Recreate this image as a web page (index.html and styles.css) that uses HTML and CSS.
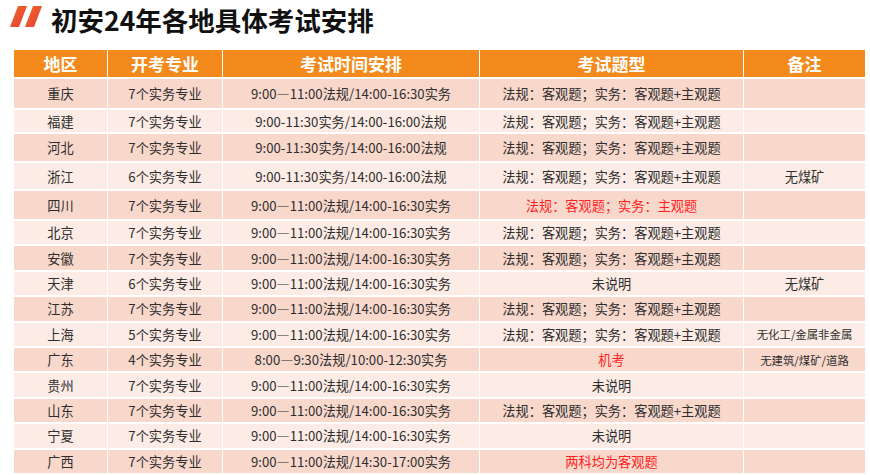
FILE: index.html
```html
<!DOCTYPE html>
<html lang="zh-CN">
<head>
<meta charset="utf-8">
<title>初安24年各地具体考试安排</title>
<link rel="stylesheet" href="styles.css">
</head>
<body>
<div class="page">
  <div class="title-bar">
    <svg class="title-icon" width="34" height="24" viewBox="0 0 34 24">
      <defs>
        <linearGradient id="g" x1="0" y1="0" x2="1" y2="1">
          <stop offset="0" stop-color="#f26a24"/>
          <stop offset="1" stop-color="#e63d3b"/>
        </linearGradient>
      </defs>
      <polygon points="8,2 17,2 9,23 0,23" fill="url(#g)"/>
      <polygon points="23,2 32,2 24,23 15,23" fill="url(#g)"/>
    </svg>
    <h1 class="title">初安24年各地具体考试安排</h1>
  </div>

  <div class="grid">
    <div class="row head">
      <div>地区</div><div>开考专业</div><div>考试时间安排</div><div>考试题型</div><div>备注</div>
    </div>
    <div class="row dark">
      <div>重庆</div><div>7个实务专业</div><div>9:00—11:00法规/14:00-16:30实务</div><div>法规：客观题；实务：客观题+主观题</div><div></div>
    </div>
    <div class="row light">
      <div>福建</div><div>7个实务专业</div><div>9:00-11:30实务/14:00-16:00法规</div><div>法规：客观题；实务：客观题+主观题</div><div></div>
    </div>
    <div class="row dark">
      <div>河北</div><div>7个实务专业</div><div>9:00-11:30实务/14:00-16:00法规</div><div>法规：客观题；实务：客观题+主观题</div><div></div>
    </div>
    <div class="row light">
      <div>浙江</div><div>6个实务专业</div><div>9:00-11:30实务/14:00-16:00法规</div><div>法规：客观题；实务：客观题+主观题</div><div>无煤矿</div>
    </div>
    <div class="row dark">
      <div>四川</div><div>7个实务专业</div><div>9:00—11:00法规/14:00-16:30实务</div><div class="red">法规：客观题；实务：主观题</div><div></div>
    </div>
    <div class="row light">
      <div>北京</div><div>7个实务专业</div><div>9:00—11:00法规/14:00-16:30实务</div><div>法规：客观题；实务：客观题+主观题</div><div></div>
    </div>
    <div class="row dark">
      <div>安徽</div><div>7个实务专业</div><div>9:00—11:00法规/14:00-16:30实务</div><div>法规：客观题；实务：客观题+主观题</div><div></div>
    </div>
    <div class="row light">
      <div>天津</div><div>6个实务专业</div><div>9:00—11:00法规/14:00-16:30实务</div><div>未说明</div><div>无煤矿</div>
    </div>
    <div class="row dark">
      <div>江苏</div><div>7个实务专业</div><div>9:00—11:00法规/14:00-16:30实务</div><div>法规：客观题；实务：客观题+主观题</div><div></div>
    </div>
    <div class="row light">
      <div>上海</div><div>5个实务专业</div><div>9:00—11:00法规/14:00-16:30实务</div><div>法规：客观题；实务：客观题+主观题</div><div class="small">无化工/金属非金属</div>
    </div>
    <div class="row dark">
      <div>广东</div><div>4个实务专业</div><div>8:00—9:30法规/10:00-12:30实务</div><div class="red">机考</div><div class="small">无建筑/煤矿/道路</div>
    </div>
    <div class="row light">
      <div>贵州</div><div>7个实务专业</div><div>9:00—11:00法规/14:00-16:30实务</div><div>未说明</div><div></div>
    </div>
    <div class="row dark">
      <div>山东</div><div>7个实务专业</div><div>9:00—11:00法规/14:00-16:30实务</div><div>法规：客观题；实务：客观题+主观题</div><div></div>
    </div>
    <div class="row light">
      <div>宁夏</div><div>7个实务专业</div><div>9:00—11:00法规/14:00-16:30实务</div><div>未说明</div><div></div>
    </div>
    <div class="row dark">
      <div>广西</div><div>7个实务专业</div><div>9:00—11:00法规/14:30-17:00实务</div><div class="red">两科均为客观题</div><div></div>
    </div>
  </div>
</div>
</body>
</html>
```

FILE: styles.css
```css
html, body {
  margin: 0;
  padding: 0;
  background: #ffffff;
}

body {
  font-family: "Noto Sans CJK SC", "Noto Sans", "Liberation Sans", sans-serif;
  color: #2e2e2e;
}

.page {
  width: 870px;
}

.title-bar {
  display: flex;
  align-items: flex-start;
  gap: 7px;
  height: 38px;
  padding-left: 10px;
  margin-bottom: 12px;
}

.title-icon {
  flex: none;
  margin-top: 4px;
}

.title {
  margin: 0;
  font-size: 26.5px;
  font-weight: 700;
  line-height: normal;
  color: #111111;
}

.grid {
  display: grid;
  margin-left: 14px;
  grid-template-columns: 93px 114px 256px 263px 121px;
  grid-template-rows: 27px 29px 22px 27px 26px 28px repeat(10, 23.4px);
  column-gap: 1px;
  row-gap: 2px;
}

.row {
  display: contents;
}

.row > div {
  display: flex;
  align-items: center;
  justify-content: center;
  font-size: 13.2px;
  white-space: nowrap;
}

.row.head > div {
  background: #f38a1b;
  color: #ffffff;
  font-size: 17px;
  font-weight: 700;
}

.row.dark > div {
  background: #f9d8cc;
}

.row.light > div {
  background: #fcece5;
}

.row > div.red {
  color: #ff1f1f;
}

.row > div.small {
  font-size: 11.4px;
}
```
